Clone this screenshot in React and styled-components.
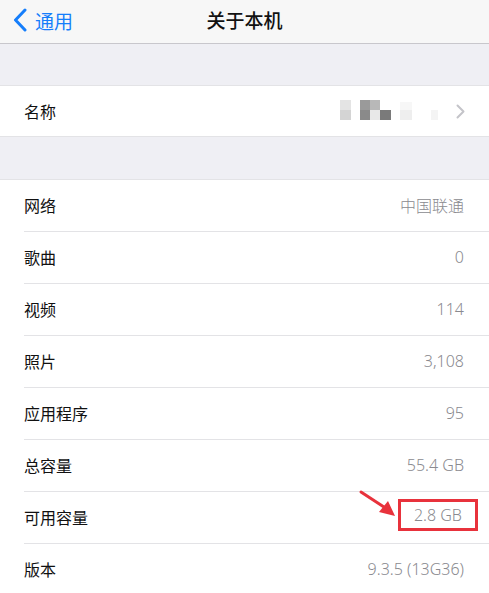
import React from 'react';
import styled, { createGlobalStyle } from 'styled-components';

const COLORS = {
  blue: '#157efb',
  text: '#111111',
  grey: '#8a8a8f',
  bg: '#efeff4',
  bar: '#f7f7f7',
  line: '#e3e3e6',
  red: '#e8323c',
};

const GlobalStyle = createGlobalStyle`
  html, body {
    margin: 0;
    padding: 0;
    background: ${COLORS.bg};
  }
  body {
    font-family: "Noto Sans CJK SC", "Noto Sans", sans-serif;
    -webkit-font-smoothing: antialiased;
  }
`;

const Page = styled.div`
  width: 489px;
  height: 593px;
  overflow: hidden;
  background: ${COLORS.bg};
`;

const NavBar = styled.header`
  position: relative;
  height: 44px;
  box-sizing: border-box;
  background: ${COLORS.bar};
  border-bottom: 1px solid #c8c7cc;
  display: flex;
  align-items: center;
  justify-content: center;
`;

const BackButton = styled.div`
  position: absolute;
  left: 13px;
  top: 0;
  height: 40px;
  display: flex;
  align-items: center;
  gap: 8px;
  color: ${COLORS.blue};
  font-size: 19px;
`;

const Title = styled.h1`
  margin: 0 0 4px;
  font-size: 19px;
  font-weight: 500;
  color: ${COLORS.text};
`;

const Gap = styled.div`
  height: ${(p) => p.$h}px;
`;

const Group = styled.section`
  background: #fff;
  border-top: 1px solid ${COLORS.line};
  border-bottom: 1px solid ${COLORS.line};
`;

const Row = styled.div`
  position: relative;
  box-sizing: border-box;
  height: ${(p) => p.$h || 51}px;
  padding-bottom: ${(p) => p.$pb || 0}px;
  margin-left: 24px;
  padding-right: 25px;
  display: flex;
  align-items: center;
  justify-content: space-between;
  font-size: 16px;
  & + & {
    border-top: 1px solid ${COLORS.line};
  }
`;

const Label = styled.span`
  color: ${COLORS.text};
`;

const Value = styled.span`
  color: ${COLORS.grey};
  font-family: "Noto Sans", "Noto Sans CJK SC", sans-serif;
  font-weight: 300;
`;

const Right = styled.div`
  display: flex;
  align-items: center;
  gap: 16px;
  margin-right: -1px;
`;

const Highlight = styled.span`
  position: relative;
  display: inline-block;
  color: ${COLORS.grey};
  font-family: "Noto Sans", "Noto Sans CJK SC", sans-serif;
  font-weight: 300;
  padding: 2px 13px 2px 13px;
  margin-right: -14px;
  border: 3px solid ${COLORS.red};
  transform: translateY(-2px);
`;

const Arrow = styled.svg`
  position: absolute;
  left: -42px;
  top: -12px;
`;

const Mosaic = () => (
  <svg width="100" height="22" viewBox="0 0 100 22">
    <rect x="0" y="0" width="11" height="10" fill="#e4e4e4" />
    <rect x="0" y="10" width="11" height="10" fill="#d4d4d4" />
    <rect x="20" y="0" width="10" height="10" fill="#9a9a9a" />
    <rect x="20" y="10" width="10" height="10" fill="#8a8a8a" />
    <rect x="30" y="0" width="10" height="10" fill="#b8b8b8" />
    <rect x="30" y="10" width="10" height="10" fill="#e8e8e8" />
    <rect x="40" y="10" width="11" height="10" fill="#7a7a7a" />
    <rect x="60" y="2" width="12" height="8" fill="#f7f7f7" />
    <rect x="60" y="10" width="12" height="10" fill="#eeeeee" />
    <rect x="91" y="10" width="7" height="10" fill="#f4f4f4" />
  </svg>
);

const Chevron = ({ color = '#c4c4c9', w = 9, h = 15, sw = 2 }) => (
  <svg width={w} height={h} viewBox="0 0 9 15">
    <path d="M1.5 1.5 L7.5 7.5 L1.5 13.5" fill="none" stroke={color} strokeWidth={sw} strokeLinecap="round" strokeLinejoin="round" />
  </svg>
);

const items = [
  ['网络', '中国联通'],
  ['歌曲', '0'],
  ['视频', '114'],
  ['照片', '3,108'],
  ['应用程序', '95'],
  ['总容量', '55.4 GB'],
  ['可用容量', '2.8 GB', true],
  ['版本', '9.3.5 (13G36)'],
];

export default function App() {
  return (
    <Page>
      <GlobalStyle />
      <NavBar>
        <BackButton>
          <svg width="14" height="24" viewBox="0 0 14 24">
            <path d="M12 2 L2.5 12 L12 22" fill="none" stroke={COLORS.blue} strokeWidth="3" strokeLinecap="round" strokeLinejoin="round" />
          </svg>
          <span>通用</span>
        </BackButton>
        <Title>关于本机</Title>
      </NavBar>
      <Gap $h={41} />
      <Group>
        <Row $h={50}>
          <Label>名称</Label>
          <Right>
            <Mosaic />
            <Chevron />
          </Right>
        </Row>
      </Group>
      <Gap $h={42} />
      <Group>
        {items.map(([label, value, mark], i) => (
          <Row key={label} $h={i === 0 ? 51 : 52} $pb={2}>
            <Label>{label}</Label>
            {mark ? (
              <Highlight>
                <Arrow width="40" height="30" viewBox="0 0 40 30">
                  <path d="M2 2 L28 19" stroke={COLORS.red} strokeWidth="3" strokeLinecap="round" />
                  <path d="M36 26 L20 22 L29 11 Z" fill={COLORS.red} />
                </Arrow>
                {value}
              </Highlight>
            ) : (
              <Value>{value}</Value>
            )}
          </Row>
        ))}
      </Group>
    </Page>
  );
}
